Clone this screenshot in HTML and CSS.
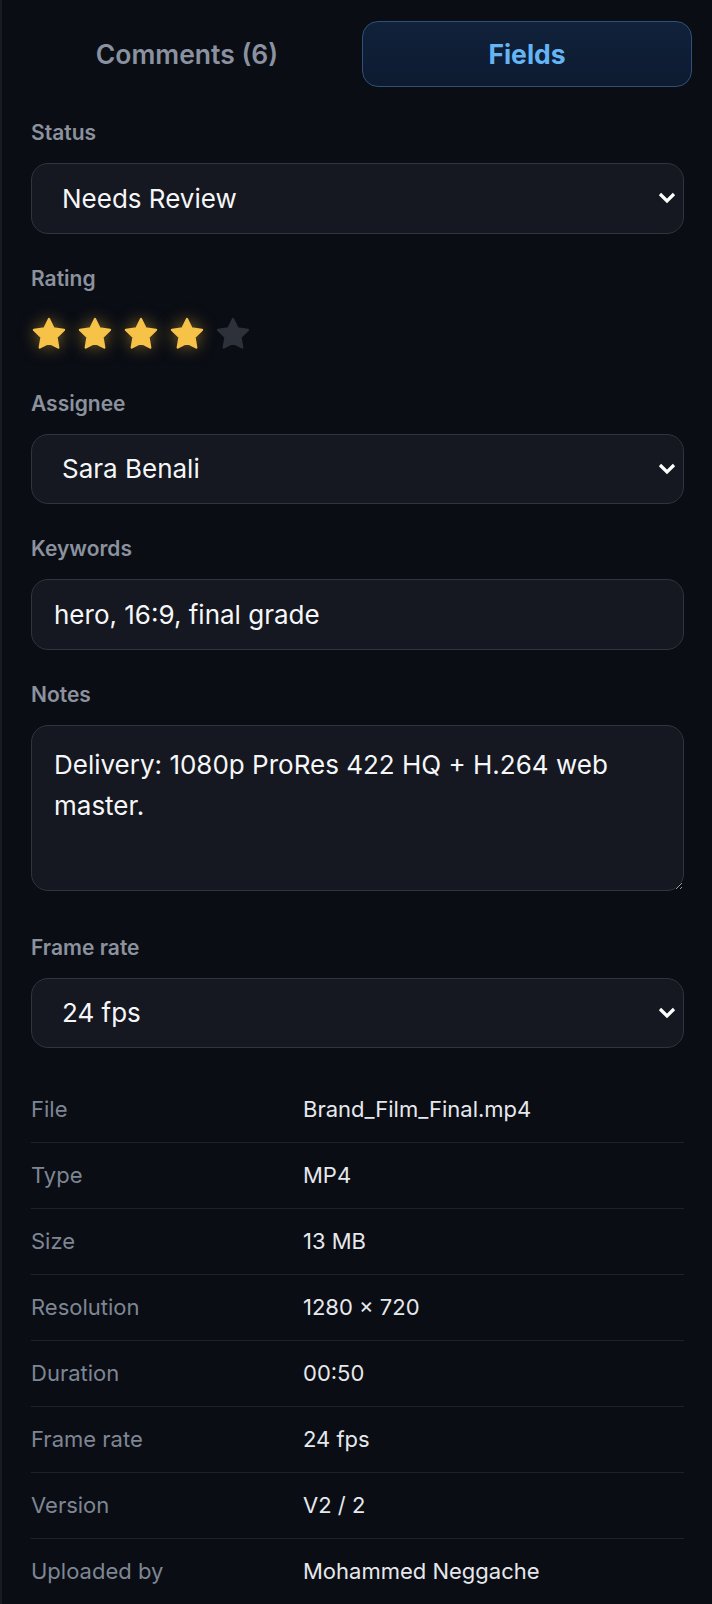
FILE: index.html
```html
<!DOCTYPE html>
<html lang="en">
<head>
    <meta charset="UTF-8">
    <meta name="viewport" content="width=device-width, initial-scale=1.0">
    <title>Asset fields</title>
    <link rel="stylesheet" href="styles.css">
</head>
<body>
    <div class="panel">
        <div class="tabs">
            <button class="tab">Comments (6)</button>
            <button class="tab tab-active">Fields</button>
        </div>

        <div class="field">
            <label class="field-label" for="status">Status</label>
            <div class="select-wrap">
                <select id="status" class="control control-select">
                    <option>Needs Review</option>
                    <option>In Progress</option>
                    <option>Approved</option>
                </select>
                <svg class="chevron" viewBox="0 0 18 12"><polyline points="2,2 9,9 16,2"/></svg>
            </div>
        </div>

        <div class="field">
            <span class="field-label">Rating</span>
            <div class="stars">
                <button class="star star-on"><svg viewBox="0 0 24 24"><path d="M12 2l3.09 6.26L22 9.27l-5 4.87 1.18 6.88L12 17.77l-6.18 3.25L7 14.14 2 9.27l6.91-1.01L12 2z"/></svg></button>
                <button class="star star-on"><svg viewBox="0 0 24 24"><path d="M12 2l3.09 6.26L22 9.27l-5 4.87 1.18 6.88L12 17.77l-6.18 3.25L7 14.14 2 9.27l6.91-1.01L12 2z"/></svg></button>
                <button class="star star-on"><svg viewBox="0 0 24 24"><path d="M12 2l3.09 6.26L22 9.27l-5 4.87 1.18 6.88L12 17.77l-6.18 3.25L7 14.14 2 9.27l6.91-1.01L12 2z"/></svg></button>
                <button class="star star-on"><svg viewBox="0 0 24 24"><path d="M12 2l3.09 6.26L22 9.27l-5 4.87 1.18 6.88L12 17.77l-6.18 3.25L7 14.14 2 9.27l6.91-1.01L12 2z"/></svg></button>
                <button class="star"><svg viewBox="0 0 24 24"><path d="M12 2l3.09 6.26L22 9.27l-5 4.87 1.18 6.88L12 17.77l-6.18 3.25L7 14.14 2 9.27l6.91-1.01L12 2z"/></svg></button>
            </div>
        </div>

        <div class="field">
            <label class="field-label" for="assignee">Assignee</label>
            <div class="select-wrap">
                <select id="assignee" class="control control-select">
                    <option>Sara Benali</option>
                    <option>Mohammed Neggache</option>
                </select>
                <svg class="chevron" viewBox="0 0 18 12"><polyline points="2,2 9,9 16,2"/></svg>
            </div>
        </div>

        <div class="field">
            <label class="field-label" for="keywords">Keywords</label>
            <input id="keywords" class="control" type="text" value="hero, 16:9, final grade">
        </div>

        <div class="field field-notes">
            <label class="field-label" for="notes">Notes</label>
            <textarea id="notes" class="control control-area">Delivery: 1080p ProRes 422 HQ + H.264 web master.</textarea>
        </div>

        <div class="field field-last">
            <label class="field-label" for="fps">Frame rate</label>
            <div class="select-wrap">
                <select id="fps" class="control control-select">
                    <option>24 fps</option>
                    <option>25 fps</option>
                    <option>30 fps</option>
                </select>
                <svg class="chevron" viewBox="0 0 18 12"><polyline points="2,2 9,9 16,2"/></svg>
            </div>
        </div>

        <dl class="meta">
            <div class="meta-row"><dt>File</dt><dd>Brand_Film_Final.mp4</dd></div>
            <div class="meta-row"><dt>Type</dt><dd>MP4</dd></div>
            <div class="meta-row"><dt>Size</dt><dd>13 MB</dd></div>
            <div class="meta-row"><dt>Resolution</dt><dd>1280 × 720</dd></div>
            <div class="meta-row"><dt>Duration</dt><dd>00:50</dd></div>
            <div class="meta-row"><dt>Frame rate</dt><dd>24 fps</dd></div>
            <div class="meta-row"><dt>Version</dt><dd>V2 / 2</dd></div>
            <div class="meta-row"><dt>Uploaded by</dt><dd>Mohammed Neggache</dd></div>
        </dl>
    </div>
</body>
</html>
```

FILE: styles.css
```css
:root {
    color-scheme: dark;
}

body {
    margin: 0;
    background: #0a0d14;
    font-family: Inter, 'Noto Sans', sans-serif;
    color: #f3f4f6;
}

.panel {
    min-height: 100vh;
    box-sizing: border-box;
    padding: 21px 28px 0 29px;
    border-left: 2px solid #171b24;
}

.tabs {
    display: flex;
    gap: 10px;
    margin: 0 -8px 33px -9px;
}

.tab {
    flex: 1;
    height: 66px;
    font-family: inherit;
    font-size: 26.5px;
    font-weight: 600;
    color: #8a92a0;
    background: none;
    border: 1px solid transparent;
    border-radius: 16px;
    cursor: pointer;
}

.tab-active {
    font-weight: 700;
    color: #65b4f4;
    background: linear-gradient(180deg, #10213a, #0d1b30);
    border-color: #2f5079;
}

.field {
    margin-bottom: 32px;
}

.field-notes {
    margin-bottom: 44px;
}

.field-last {
    margin-bottom: 29px;
}

.field-label {
    display: block;
    margin-bottom: 18px;
    font-size: 21px;
    font-weight: 600;
    line-height: 25px;
    color: #8b929e;
}

.control {
    display: block;
    width: 100%;
    height: 70.5px;
    box-sizing: border-box;
    padding: 0 22px;
    font-family: inherit;
    font-size: 26px;
    color: #f5f6f8;
    background: #151820;
    border: 1px solid #30343e;
    border-radius: 17px;
    outline: none;
}

.select-wrap {
    position: relative;
}

.control-select {
    appearance: none;
    padding: 0 48px 0 30px;
    cursor: pointer;
}

.chevron {
    position: absolute;
    top: 50%;
    right: 8px;
    width: 18px;
    height: 12px;
    margin-top: -6px;
    fill: none;
    stroke: #ffffff;
    stroke-width: 3.2;
    pointer-events: none;
}

.control-area {
    height: 166px;
    padding: 18px 22px;
    line-height: 1.6;
}

.stars {
    display: flex;
    align-items: center;
    gap: 10px;
    height: 50px;
}

.star {
    width: 36px;
    height: 36px;
    padding: 0;
    background: none;
    border: none;
    color: #2d313a;
    cursor: pointer;
}

.star svg {
    display: block;
    width: 36px;
    height: 36px;
    fill: currentColor;
    stroke: currentColor;
    stroke-width: 1.5;
    stroke-linejoin: round;
}

.star-on {
    color: #f7c248;
    filter: drop-shadow(0 0 8px rgba(247, 188, 60, 0.5));
}

.meta {
    margin: 0;
}

.meta-row {
    display: grid;
    grid-template-columns: 272px 1fr;
    padding: 16px 0;
    font-size: 22px;
    line-height: 33px;
    border-bottom: 1px solid #1e222b;
}

.meta-row:last-child {
    border-bottom: none;
}

.meta-row dt {
    color: #7e8693;
}

.meta-row dd {
    margin: 0;
    color: #e6e8ec;
}
```
